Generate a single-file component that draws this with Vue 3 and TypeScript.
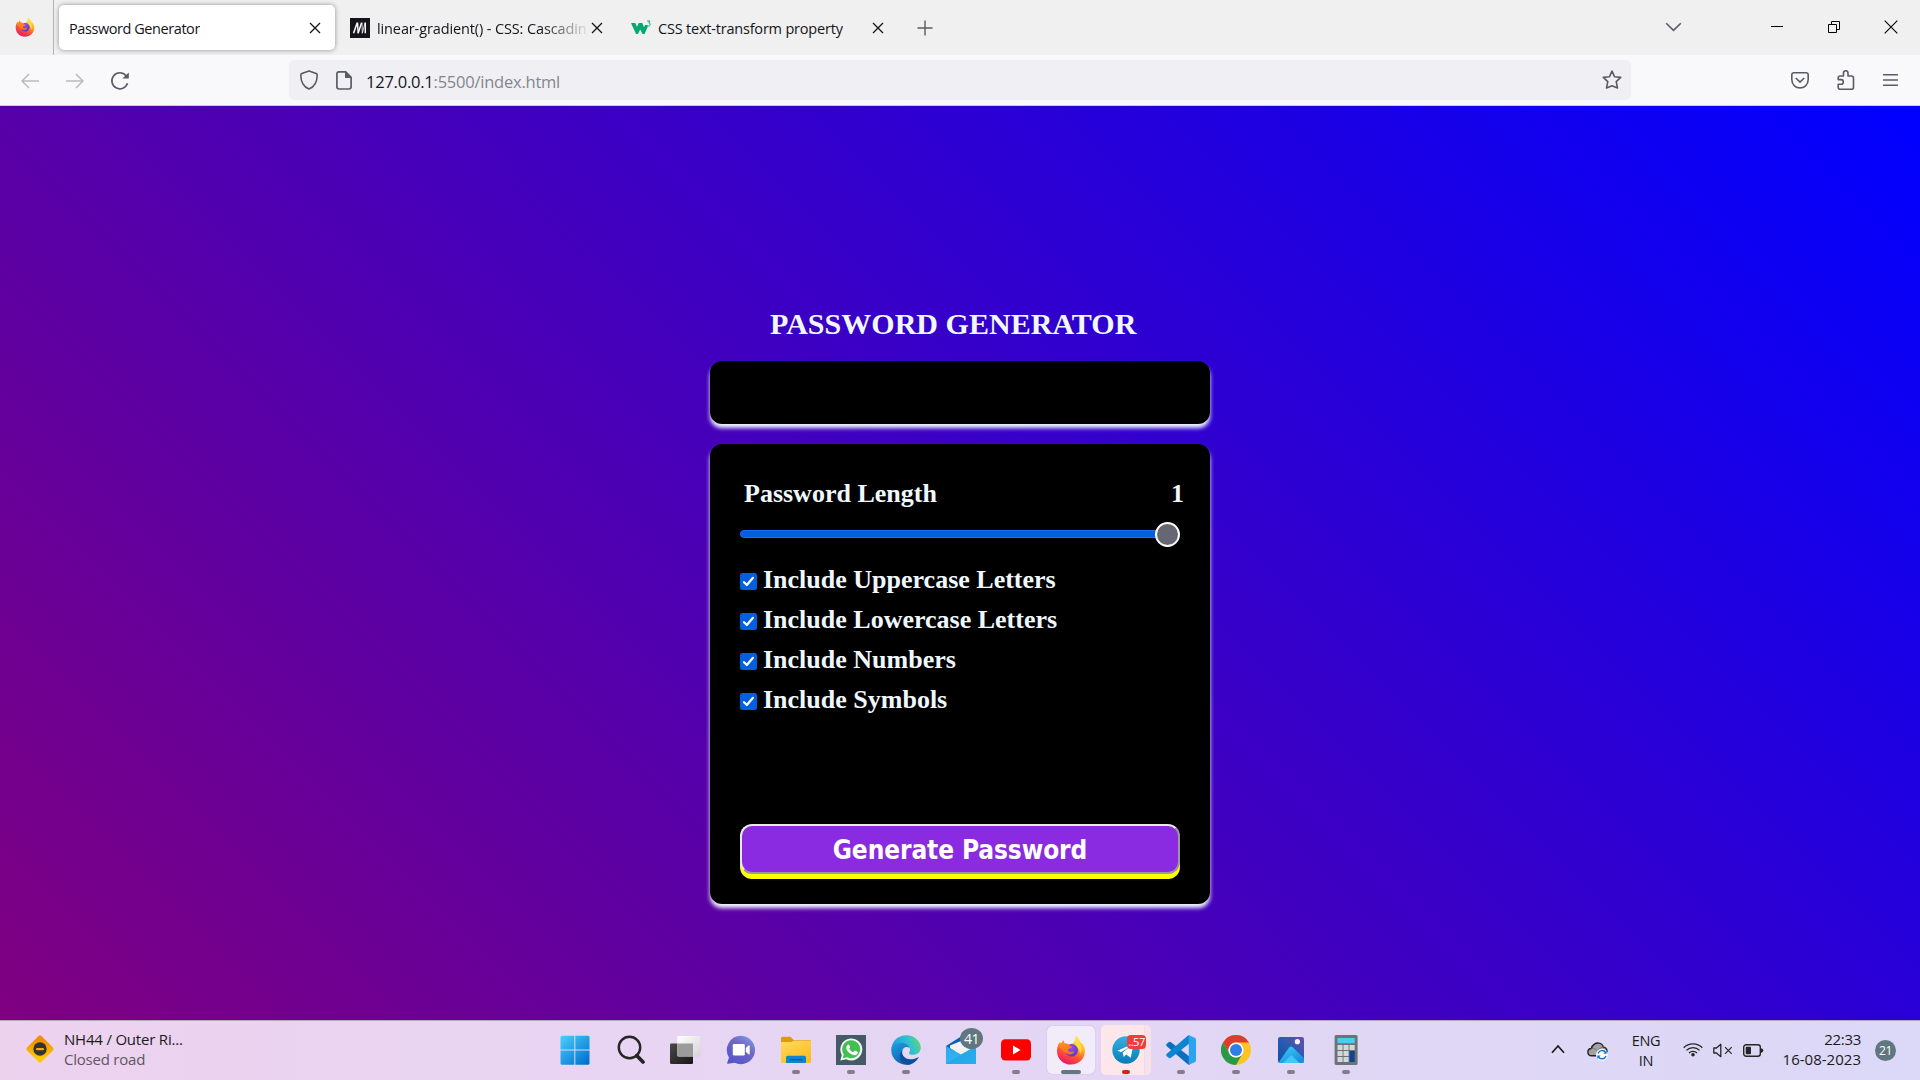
<script setup lang="ts">
import { ref } from 'vue'

interface Option {
  label: string
  checked: boolean
}

const passwordLength = ref<number>(1)
const options = ref<Option[]>([
  { label: 'Include Uppercase Letters', checked: true },
  { label: 'Include Lowercase Letters', checked: true },
  { label: 'Include Numbers', checked: true },
  { label: 'Include Symbols', checked: true },
])
</script>

<template>
  <div class="desktop">
    <svg class="defs" width="0" height="0">
      <defs>
        <linearGradient id="fx-body" x1="0.8" y1="0" x2="0.3" y2="1">
          <stop offset="0" stop-color="#fff44f" /><stop offset="0.35" stop-color="#ffb321" />
          <stop offset="0.62" stop-color="#ff5a33" /><stop offset="1" stop-color="#ee1164" />
        </linearGradient>
        <radialGradient id="fx-globe" cx="0.45" cy="0.3" r="0.75">
          <stop offset="0" stop-color="#a04be8" /><stop offset="0.6" stop-color="#6a45d8" /><stop offset="1" stop-color="#4a3cb0" />
        </radialGradient>
        <linearGradient id="fx-flame" x1="0" y1="0" x2="0.7" y2="1">
          <stop offset="0" stop-color="#ff9a1f" /><stop offset="1" stop-color="#ff6a25" />
        </linearGradient>
        <symbol id="firefox" viewBox="0 0 30 30">
          <path d="M20.3 1C22.5 2.5 23.6 5 24.2 7C27.2 8.8 29 12 29 16.3C29 23.8 22.8 29.6 15 29.6C7.2 29.6 1 23.8 1 16.2C1 12.6 2 9.5 3.7 7.2L4.6 9L7.3 5.2L8.5 8.5C10.5 8.2 12 9 13 10.2C15 8.2 18.2 9.2 18.6 6.5C18.8 4.5 19.2 2.7 20.3 1Z" fill="url(#fx-body)" />
          <circle cx="15.6" cy="15.3" r="6.3" fill="url(#fx-globe)" />
          <path d="M2.3 11.5L4 7.2L5 9L7.3 5.2L8.5 8.6C11 8.3 12.6 9.2 13.4 10.8L16.2 11.6C16 13 14 13.3 12.6 14C11.4 14.7 12 16.4 13.6 16.8C15.3 17.2 16.6 16 18.3 16.8C17 19.6 13.5 20.3 11 18.6C7 17 5 12.5 2.3 11.5Z" fill="url(#fx-flame)" />
          <path d="M20.2 2.2C22.6 4.4 22.8 7 23.6 8.5C26.2 12 26 16 24 19C23.8 14.5 22.2 12.6 20 10.8C18.3 9 18.8 5 20.2 2.2Z" fill="#ffe345" opacity="0.85" />
        </symbol>
        <symbol id="cross" viewBox="0 0 12 12">
          <path d="M1 1L11 11M11 1L1 11" stroke="#15141a" stroke-width="1.3" fill="none" />
        </symbol>
      </defs>
    </svg>

    <header class="tabs">
      <div class="pinned"><svg width="20" height="20"><use href="#firefox" /></svg></div>
      <div class="tab active">
        <span class="tab-title t1">Password Generator</span>
        <svg class="x" width="12" height="12"><use href="#cross" /></svg>
      </div>
      <div class="tab second">
        <svg width="20" height="20" viewBox="0 0 20 20">
          <rect width="20" height="20" fill="#15141a" />
          <path d="M3.6 15.3L7.2 4.7M8.1 15.3L11.6 4.7" stroke="#fff" stroke-width="1.5" fill="none" />
          <path d="M7.6 4.5L8.1 15.3M15.3 4.5V15.3" stroke="#fff" stroke-width="1.4" />
          <path d="M12 4.5L12.3 15.3L15.1 4.7" stroke="#fff" stroke-width="0.8" fill="none" />
        </svg>
        <span class="tab-title fade">linear-gradient() - CSS: Cascading</span>
        <svg class="x" width="12" height="12"><use href="#cross" /></svg>
      </div>
      <div class="tab third">
        <svg width="20" height="20" viewBox="0 0 20 20">
          <path d="M0 5H4.3L6 9L7.7 5H11.3L13 9.3L14 7H16.2L16.8 8.7L13.5 16H11.5L9.2 11.6L7 16H5Z" fill="#04a96d" />
          <path d="M16.2 3H19L17.8 4.9C19.9 5 19.7 8 17.6 8C16.7 8 16.2 7.6 16 7.1" fill="none" stroke="#04a96d" stroke-width="1" />
        </svg>
        <span class="tab-title t3">CSS text-transform property</span>
        <svg class="x" width="12" height="12"><use href="#cross" /></svg>
      </div>
      <svg class="plus" width="16" height="16"><path d="M8 .5V15.5M.5 8H15.5" stroke="#5b5b66" stroke-width="1.4" /></svg>
      <div class="window-buttons">
        <svg width="17" height="10" viewBox="0 0 17 10"><path d="M1.2 1.2L8.5 8.3L15.8 1.2" fill="none" stroke="#5b5b66" stroke-width="1.6" /></svg>
        <svg class="min" width="12" height="13"><path d="M0 5.5H12" stroke="#000" /></svg>
        <svg class="restore" width="12" height="12"><path d="M.5 3.5H8.5V11.5H.5ZM3.5 3.5V.5H11.5V8.5H8.5" fill="none" stroke="#000" /></svg>
        <svg class="close" width="14" height="14"><path d="M.7 .7L13.3 13.3M13.3 .7L.7 13.3" stroke="#000" stroke-width="1.1" /></svg>
      </div>
    </header>

    <nav class="toolbar">
      <svg class="back" width="18" height="16"><path d="M18 8H1M8 1L1 8L8 15" fill="none" stroke="#b9b9c0" stroke-width="1.5" /></svg>
      <svg class="forward" width="18" height="16"><path d="M0 8H17M10 1L17 8L10 15" fill="none" stroke="#b9b9c0" stroke-width="1.5" /></svg>
      <svg class="reload" width="20" height="20" viewBox="0 0 20 20">
        <path d="M17.5 12.2A8 8 0 1 1 16 4.6" fill="none" stroke="#5b5b66" stroke-width="1.7" />
        <path d="M18.8 1.5V7.5H12.4Z" fill="#5b5b66" />
      </svg>
      <div class="address">
        <svg class="shield" width="18" height="20" viewBox="0 0 18 20"><path d="M9 .9L16.2 3.6Q17.2 4 17.2 5C17.2 11.5 14.5 16.8 9 19.1C3.5 16.8.8 11.5.8 5Q.8 4 1.8 3.6Z" fill="none" stroke="#5b5b66" stroke-width="1.6" stroke-linejoin="round" /></svg>
        <svg class="page-icon" width="16" height="19" viewBox="0 0 16 19"><path d="M3 .9H9.7L15.1 6.3V15.8Q15.1 18 13 18H3Q.9 18 .9 15.8V3Q.9.9 3 .9Z" fill="none" stroke="#5b5b66" stroke-width="1.7" /><path d="M9 0V7H16Z" fill="#5b5b66" /></svg>
        <span class="url"><b>127.0.0.1</b>:5500/index.html</span>
        <svg class="star" width="20" height="20" viewBox="0 0 20 20"><path d="M10 1.1L12.5 6.7L18.7 7.4L14.2 11.7L15.5 18L10 15.7L4.5 18L5.8 11.7L1.3 7.4L7.5 6.7Z" fill="none" stroke="#5b5b66" stroke-width="1.6" stroke-linejoin="round" /></svg>
      </div>
      <div class="tools">
        <svg width="18" height="17" viewBox="0 0 18 17"><path d="M3 .8H15Q17.2.8 17.2 3V7.5C17.2 18.7.8 18.7.8 7.5V3Q.8.8 3 .8Z" fill="none" stroke="#5b5b66" stroke-width="1.6" /><path d="M4.8 6L9 10L13.2 6" fill="none" stroke="#5b5b66" stroke-width="1.7" /></svg>
        <svg class="puzzle" width="18" height="20" viewBox="0 0 18 20"><path d="M3.2 19.2Q1.2 19.2 1.2 17.2V14.2H4.2C7 14.2 7 9.6 4.2 9.6H1.2V8Q1.2 6 3.2 6H6.5V3.2C6.5 0 11 0 11 3.2V6H14.5Q16.5 6 16.5 8V17.2Q16.5 19.2 14.5 19.2Z" fill="none" stroke="#5b5b66" stroke-width="1.6" stroke-linejoin="round" /></svg>
        <svg class="menu" width="15" height="12"><path d="M0 .8H15M0 6H15M0 11.2H15" stroke="#5b5b66" stroke-width="1.5" /></svg>
      </div>
    </nav>

    <main class="page">
      <div class="generator">
        <h2>PASSWORD GENERATOR</h2>
        <div class="display"></div>
        <section class="settings">
          <div class="length-row"><span>Password Length</span><span>{{ passwordLength }}</span></div>
          <div class="slider"><div class="track"></div><div class="thumb"></div></div>
          <label v-for="option in options" :key="option.label" class="option">
            <svg class="check" width="17" height="17" viewBox="0 0 17 17">
              <rect width="17" height="17" rx="2.5" fill="#0060df" />
              <path v-if="option.checked" d="M4 9.2L6.8 12L13 4.8" fill="none" stroke="#fff" stroke-width="2.2" stroke-linecap="round" stroke-linejoin="round" />
            </svg>
            <span>{{ option.label }}</span>
          </label>
          <button class="generate">Generate Password</button>
        </section>
      </div>
    </main>

    <footer class="taskbar">
      <div class="widget">
        <svg width="30" height="30" viewBox="0 0 30 30">
          <defs><linearGradient id="sign" x1="0" y1="0" x2="1" y2="1"><stop offset="0.2" stop-color="#ee8f06" /><stop offset="0.8" stop-color="#fcc80a" /></linearGradient></defs>
          <rect x="4.8" y="4.8" width="20.4" height="20.4" rx="2" transform="rotate(45 15 15)" fill="url(#sign)" />
          <circle cx="15" cy="15" r="6.7" fill="#333" /><rect x="11" y="14" width="8" height="2.2" rx="1" fill="#f5a90a" />
        </svg>
        <div class="widget-text"><span class="w1">NH44 / Outer Ri...</span><span class="w2">Closed road</span></div>
      </div>

      <div class="apps">
        <div class="app">
          <svg width="30" height="30" viewBox="0 0 30 30">
            <defs><linearGradient id="win" gradientUnits="userSpaceOnUse" x1="0" y1="0" x2="26" y2="30"><stop offset="0" stop-color="#4cd2fd" /><stop offset="1" stop-color="#0070d0" /></linearGradient></defs>
            <path d="M2 .8H14.3V14.5H.5V2.3Q.5.8 2 .8ZM15.3 .8H28Q29.5.8 29.5 2.3V14.5H15.3ZM.5 15.6H14.3V29.7H2Q.5 29.7 .5 28.2ZM15.3 15.6H29.5V28.2Q29.5 29.7 28 29.7H15.3Z" fill="url(#win)" />
          </svg>
        </div>
        <div class="app">
          <svg width="30" height="30" viewBox="0 0 30 30"><circle cx="14.5" cy="12.5" r="10.7" fill="none" stroke="#252525" stroke-width="2.4" /><path d="M21.7 20.5L28 27" stroke="#252525" stroke-width="3.7" stroke-linecap="round" /></svg>
        </div>
        <div class="app">
          <svg width="32" height="30" viewBox="0 0 32 30">
            <defs><linearGradient id="tv" x2="1" y2="1"><stop stop-color="#484848" /><stop offset="1" stop-color="#171717" /></linearGradient><linearGradient id="tw" x2="1" y2="1"><stop stop-color="#fff" /><stop offset="1" stop-color="#d4d4d4" /></linearGradient></defs>
            <rect x="1" y="8.5" width="23" height="20.5" rx="1.2" fill="url(#tv)" /><rect x="8.3" y="1" width="23" height="20.5" rx="1.2" fill="url(#tw)" />
            <path d="M8.3 8.5H24V21.5H9.5Q8.3 21.5 8.3 20.3Z" fill="#9b9b9b" />
          </svg>
        </div>
        <div class="app">
          <svg width="30" height="30" viewBox="0 0 30 30">
            <defs><linearGradient id="chat" x1="1" y1="0" x2="0.3" y2="1"><stop stop-color="#7fa8ee" /><stop offset=".45" stop-color="#7267c5" /><stop offset="1" stop-color="#5457c9" /></linearGradient></defs>
            <path d="M15 .8A14.2 14.2 0 1 1 8.7 27.8L2 28.7Q.8 28.8 1.3 27.5L3 22.5A14.2 14.2 0 0 1 15 .8Z" fill="url(#chat)" />
            <rect x="6.8" y="9" width="12" height="11.6" rx="1.3" fill="#fff" /><path d="M19.8 13L22.5 10.5Q23.7 10 23.7 11.4V18.5Q23.7 20 22.5 19.2L19.8 16.8Z" fill="#fff" />
          </svg>
        </div>
        <div class="app">
          <svg width="30" height="30" viewBox="0 0 30 30">
            <defs><linearGradient id="fold" x2="0.7" y2="1"><stop stop-color="#ffda62" /><stop offset="1" stop-color="#fcbc1c" /></linearGradient></defs>
            <path d="M0 3.3Q0 1.8 1.5 1.8H9.5L13 5.2H28.5Q30 5.2 30 6.5V10H0Z" fill="#dd9a0c" />
            <path d="M0 7H10L13 5.8H30V26.6Q30 28 28.5 28H1.5Q0 28 0 26.6Z" fill="url(#fold)" />
            <path d="M5 28V22.5Q5 20.8 6.7 20.8H23.3Q25 20.8 25 22.5V28Z" fill="#0f84d4" /><path d="M8.5 24.7H21.5" stroke="#0854a0" stroke-width="1.2" />
          </svg><i class="dot"></i>
        </div>
        <div class="app">
          <svg width="30" height="30" viewBox="0 0 30 30">
            <rect width="30" height="30" fill="#445b66" />
            <path d="M4.3 25.6L5.8 20A11 11 0 1 1 10.2 24.2Z" fill="#f5f7f5" /><path d="M6.7 23.2L7.8 19.4A9 9 0 1 1 11 22.2Z" fill="#41bf53" />
            <path d="M11.8 9.7Q12.8 9.1 13.3 10.2L14.1 12Q14.1 12.8 13.1 13.6Q14.5 16.3 17.3 17.2L18.6 15.8Q19 15.5 19.7 15.8L21.5 16.7Q22.1 17.2 21.8 18Q20.8 20.4 18.2 20.2C14 19.4 11.5 17 10.3 13.8Q9.8 11.3 11.8 9.7Z" fill="#fff" />
          </svg><i class="dot"></i>
        </div>
        <div class="app">
          <svg width="30" height="30" viewBox="0 0 30 30">
            <defs><linearGradient id="edge1" y1=".3" x2="1"><stop stop-color="#1aa0dc" /><stop offset=".55" stop-color="#35c1cf" /><stop offset="1" stop-color="#65e05c" /></linearGradient><linearGradient id="edge2" x2="0.5" y2="1"><stop stop-color="#1da0e2" /><stop offset="1" stop-color="#0f5fb4" /></linearGradient></defs>
            <path d="M.3 13.5C1.5 5 8 .2 15 .2C24 .2 29.8 6.5 29.8 12.6C29.8 17 26.5 19.8 22.5 19.8C18.5 19.8 17.2 18.3 18.6 16.4C20.5 13 17.2 8.5 11 8.2C6.5 8 2.5 10.4 .3 13.5Z" fill="url(#edge1)" />
            <path d="M.2 15C.2 10.5 5 7.5 10.5 7.8C15.5 8.1 18.4 11 18.8 13.5C15.5 10.2 10.8 13 10.6 18C10.4 23.7 14.5 28.5 19.5 29.2C9.5 31.6.2 24.5.2 15Z" fill="url(#edge2)" />
            <path d="M12 14.5C8.5 20.5 16.5 28.2 27.8 22C25.4 26.8 20.5 30 16.5 29.8C9 28.5 6 20 12 14.5Z" fill="#0c4f9c" />
          </svg><i class="dot"></i>
        </div>
        <div class="app">
          <svg width="30" height="30" viewBox="0 0 30 30">
            <defs><linearGradient id="mail" x2="1" y2="1"><stop stop-color="#2fa9ea" /><stop offset="1" stop-color="#2dbdf5" /></linearGradient></defs>
            <path d="M0 11L15 1.5L30 11V16H0Z" fill="#0c60b4" /><path d="M4 10.5L15 6L26 8.5V14L15 20L4 13Z" fill="#f2f2f2" />
            <path d="M0 11L15 19.5L30 11V29H0Z" fill="url(#mail)" /><path d="M0 29L17 18.4L30 11V29Z" fill="#1b93dc" opacity=".35" />
          </svg><span class="badge mail-badge">41</span>
        </div>
        <div class="app">
          <svg width="30" height="30" viewBox="0 0 30 30"><rect y="4.3" width="30" height="21.2" rx="4.2" fill="#f00" /><path d="M12 10.6V19.4L19.5 15Z" fill="#fff" /></svg><i class="dot"></i>
        </div>
        <div class="app"><div class="tile"></div><svg width="30" height="30"><use href="#firefox" /></svg><i class="dot wide"></i></div>
        <div class="app">
          <div class="tile alert"></div>
          <svg width="30" height="30" viewBox="0 0 30 30">
            <defs><linearGradient id="tg" x2="0" y2="1"><stop stop-color="#37aee2" /><stop offset="1" stop-color="#087cb8" /></linearGradient></defs>
            <circle cx="15" cy="15" r="13.7" fill="url(#tg)" /><path d="M6.5 15.8L22.5 8.5L19.8 22.7L15.2 19.5L12.7 22L11.7 17.5L19.2 11.6L10.2 17Z" fill="#fff" />
          </svg><span class="count">..57</span><i class="dot red"></i>
        </div>
        <div class="app">
          <svg width="30" height="30" viewBox="0 0 30 30">
            <path d="M.5 9L3 7Q4 6.5 5 7.2L24 22V29.5L22 29.6L.5 11Q0 10 .5 9Z" fill="#0a70bd" />
            <path d="M.5 21L3 23Q4 23.5 5 22.8L24 8V.5L22 .4L.5 19Q0 20 .5 21Z" fill="#0b85d2" />
            <path d="M22.3 0L28.7 2.7Q30 3.3 30 4.7V25.3Q30 26.7 28.7 27.3L22.3 30Q22.8 29.3 22.8 28V2Q22.8.7 22.3 0Z" fill="#2aa4f0" />
          </svg><i class="dot"></i>
        </div>
        <div class="app">
          <svg width="30" height="30" viewBox="0 0 30 30">
            <circle cx="15" cy="15" r="15" fill="#fcc525" /><path d="M2 7.5A15 15 0 0 1 28 7.5H15A7.5 7.5 0 0 0 8.5 18.7Z" fill="#e03c2d" />
            <path d="M2 7.5L8.5 18.75A7.5 7.5 0 0 0 21.5 18.75L15 30A15 15 0 0 1 2 7.5Z" fill="#279a4a" />
            <circle cx="15" cy="15" r="7.6" fill="#fff" /><circle cx="15" cy="15" r="6" fill="#2f7de9" />
          </svg><i class="dot"></i>
        </div>
        <div class="app">
          <svg width="30" height="30" viewBox="0 0 30 30">
            <defs><linearGradient id="ph" x1="0" y1="1" x2="1" y2="0"><stop stop-color="#0e4faa" /><stop offset=".55" stop-color="#2d5cae" /><stop offset="1" stop-color="#6c4caa" /></linearGradient><linearGradient id="mt" x2="0.6" y2="1"><stop stop-color="#3fd0fb" /><stop offset="1" stop-color="#1990df" /></linearGradient></defs>
            <rect x="2" y="2" width="26" height="26" rx="2.2" fill="url(#ph)" />
            <path d="M3 26.8L13.2 12.5Q15 10.5 17 12.5L28 23.3V26Q28 28 26 28H4.2Q2.8 28 3 26.8Z" fill="url(#mt)" /><path d="M7 28L15.3 20L23.5 28Z" fill="#45c5f5" />
            <circle cx="21.4" cy="6.7" r="2.6" fill="#f6f1ff" />
          </svg><i class="dot"></i>
        </div>
        <div class="app">
          <svg width="30" height="30" viewBox="0 0 30 30">
            <rect x="3.6" width="23" height="30" rx="1.5" fill="#6c7378" /><rect x="6.5" y="3" width="17.2" height="5.2" rx=".6" fill="#43d0f5" />
            <path d="M6.5 10H11.6V15H6.5ZM12.5 10H17.6V15H12.5ZM18.5 10H23.7V15H18.5ZM6.5 16H11.6V21H6.5ZM12.5 16H17.6V21H12.5ZM6.5 22H11.6V27H6.5ZM12.5 22H17.6V27H12.5Z" fill="#d3d7da" />
            <rect x="18.5" y="16" width="5.2" height="11" fill="#0e458c" />
          </svg><i class="dot"></i>
        </div>
      </div>

      <div class="tray">
        <svg class="up" width="14" height="10"><path d="M1 8.7L7 2L13 8.7" fill="none" stroke="#1b1b1b" stroke-width="1.7" /></svg>
        <svg class="cloud" width="21" height="19" viewBox="0 0 21 19">
          <path d="M4.8 13.8C-.4 13.5-.3 6.8 4.4 6.5C5.2 2.2 9 .7 11.8 1.1C14.2 1.4 15.8 3.1 16.3 5.1C21 5.7 21.5 13 16.3 13.8Z" fill="#a2a2a2" stroke="#202020" stroke-width="1.4" />
          <path d="M4.4 6.5C7 6 9 7 10.5 9C12 6.7 14 5.2 16.3 5.1" fill="none" stroke="#777" stroke-width="1" />
          <circle cx="15" cy="12.7" r="6" fill="#fff" />
          <path d="M11 11.5A4.3 4.3 0 0 1 18.7 10.6M19 14A4.3 4.3 0 0 1 11.3 14.8" fill="none" stroke="#1673cd" stroke-width="1.5" /><path d="M19.7 8.4V11.8H16.3ZM10.3 17V13.6H13.7Z" fill="#1673cd" />
        </svg>
        <div class="lang"><span>ENG</span><span>IN</span></div>
        <svg class="wifi" width="20" height="15" viewBox="0 0 20 15"><path d="M.7 5.7A13.1 13.1 0 0 1 19.3 5.7M3.4 8.4A9.3 9.3 0 0 1 16.6 8.4M6 11A5.6 5.6 0 0 1 14 11" fill="none" stroke="#252525" stroke-width="1.3" /><circle cx="10" cy="12.7" r="1.8" fill="#252525" /></svg>
        <svg class="speaker" width="20" height="15" viewBox="0 0 20 15"><path d="M.8 5H3.5L7.8 1.3V13.7L3.5 10H.8Z" fill="none" stroke="#252525" stroke-width="1.3" stroke-linejoin="round" /><path d="M12 4.2L18.7 10.9M18.7 4.2L12 10.9" stroke="#252525" stroke-width="1.2" /></svg>
        <svg class="battery" width="21" height="13" viewBox="0 0 21 13"><rect x=".7" y=".7" width="16.6" height="11.6" rx="2.5" fill="none" stroke="#252525" stroke-width="1.4" /><rect x="2.7" y="2.7" width="5.3" height="7.6" rx="1" fill="#252525" /><path d="M18 4.2Q20.3 4.4 20.3 6.5Q20.3 8.6 18 8.8Z" fill="#252525" /></svg>
        <div class="clock"><span class="time">22:33</span><span class="date">16-08-2023</span></div>
        <span class="badge notif">21</span>
      </div>
    </footer>
  </div>
</template>

<style>
body {
  margin: 0;
  overflow: hidden;
}
</style>

<style scoped>
* {
  box-sizing: border-box;
}
svg {
  display: block;
  flex: none;
}
.defs {
  position: absolute;
}
.desktop {
  display: flex;
  flex-direction: column;
  width: 1920px;
  height: 1080px;
  overflow: hidden;
  font-family: 'Open Sans', 'Noto Sans', sans-serif;
  color: #15141a;
}

/* Tab strip */
.tabs {
  display: flex;
  height: 55px;
  background: #f0f0f0;
  flex: none;
}
.pinned {
  width: 54px;
  padding: 17px 0 0 15px;
  border-right: 1px solid #b3b3b5;
}
.tab {
  display: flex;
  align-items: center;
  height: 45px;
  margin-top: 5px;
  font-size: 15px;
  white-space: nowrap;
}
.tab-title {
  line-height: 20px;
  flex: none;
  overflow: hidden;
  padding-top: 3px;
}
.tab .x {
  margin-left: auto;
}
.active {
  width: 276px;
  margin-left: 5px;
  padding: 0 14.5px 0 10px;
  background: #fff;
  border-radius: 5px;
  box-shadow: 0 0 5px rgba(0, 0, 0, 0.4);
}
.t1 {
  font-size: 14.5px;
  letter-spacing: -0.43px;
}
.second {
  width: 252.5px;
  margin-left: 15px;
}
.fade {
  width: 210px;
  margin-left: 7px;
  font-size: 14.5px;
  letter-spacing: -0.12px;
  mask-image: linear-gradient(to right, #000 165px, transparent 214px);
}
.third {
  width: 252.5px;
  margin-left: 28.5px;
}
.t3 {
  margin-left: 7px;
  font-size: 14.5px;
  letter-spacing: -0.2px;
}
.plus {
  margin: 20px 0 0 33.5px;
}
.window-buttons {
  display: flex;
  align-items: flex-start;
  margin-left: auto;
  padding: 22px 22px 0 0;
}
.min {
  margin: -1px 0 0 89px;
}
.restore {
  margin: -1px 0 0 45px;
}
.close {
  margin: -2px 0 0 44px;
}

/* Navigation */
.toolbar {
  display: flex;
  align-items: center;
  height: 51px;
  padding-left: 21px;
  background: #f9f9fb;
  border-bottom: 1px solid #cccccf;
  flex: none;
}
.back,
.forward {
  margin-top: 1px;
}
.forward {
  margin-left: 27px;
}
.reload {
  margin: 2px 0 0 26px;
}
.address {
  display: flex;
  align-items: center;
  width: 1342px;
  height: 40px;
  margin-left: 159px;
  padding: 0 9px 0 11px;
  background: #f0f0f4;
  border-radius: 5px;
}
.page-icon {
  margin-left: 18px;
}
.url {
  margin-left: 14px;
  padding-top: 4px;
  font-size: 16.5px;
  letter-spacing: -0.23px;
  line-height: 24px;
  color: #85858d;
}
.url b {
  font-weight: 400;
  color: #15141a;
}
.star {
  margin-left: auto;
}
.tools {
  display: flex;
  align-items: center;
  margin-left: 160px;
}
.puzzle {
  margin-left: 28px;
}
.menu {
  margin-left: 27.5px;
  margin-bottom: 1px;
}

/* Page */
.page {
  display: flex;
  justify-content: center;
  height: 914px;
  background: linear-gradient(45deg, purple, blue);
  flex: none;
}
.generator {
  width: 500px;
  padding-top: 200px;
  font-family: 'Liberation Serif', 'Times New Roman', serif;
  font-weight: 700;
  color: aliceblue;
}
h2 {
  margin: 0 0 19px 60px;
  font-size: 30px;
  letter-spacing: 0.03px;
  line-height: 36px;
}
.display {
  height: 63px;
  border-radius: 12px;
  background: #000;
  box-shadow: 0 4px 4px aliceblue;
}
.settings {
  height: 460px;
  margin-top: 20px;
  padding: 35px 30px 0;
  border-radius: 12px;
  background: #000;
  box-shadow: 0 4px 4px aliceblue;
  font-size: 26px;
}
.length-row {
  display: flex;
  justify-content: space-between;
  margin: 0 -4px 13px 4px;
  line-height: 30px;
}
.slider {
  display: flex;
  align-items: center;
  height: 25px;
  margin-bottom: 13px;
}
.track {
  flex: 1;
  height: 8px;
  margin: 0 -2px 1px 0;
  background: #0060df;
  border: 1px solid #1a70f0;
  border-radius: 4px 0 0 4px;
}
.thumb {
  width: 25px;
  height: 25px;
  border: 2px solid #fff;
  border-radius: 50%;
  background: #676774;
}
.option {
  display: flex;
  height: 40px;
  line-height: 40px;
}
.check {
  margin: 13px 6px 0 0;
}
.generate {
  display: block;
  width: 440px;
  height: 50px;
  margin-top: 104px;
  padding: 2px 0 0;
  border: 2px solid;
  border-color: #e8e8ec #999 #999 #e8e8ec;
  border-radius: 12px;
  background: blueviolet;
  box-shadow: 0 5px 0 yellow;
  font-family: 'DejaVu Sans Condensed', 'DejaVu Sans', sans-serif;
  font-stretch: condensed;
  font-size: 26px;
  font-weight: 700;
  letter-spacing: -0.1px;
  line-height: 44px;
  color: #fff;
}

/* Taskbar */
.taskbar {
  display: flex;
  height: 60px;
  border-top: 1px solid #b5a5bd;
  background: linear-gradient(to right, #edd2ee, #e7d5f3 35%, #dfd7f5 75%, #dcd8f7);
  color: #1b1b1b;
  font-size: 15px;
  flex: none;
}
.widget {
  display: flex;
  width: 547px;
  padding-left: 25px;
  flex: none;
}
.widget svg {
  margin-top: 13px;
}
.widget-text {
  display: flex;
  flex-direction: column;
  margin: 8px 0 0 9px;
  line-height: 20px;
}
.w1 {
  letter-spacing: -0.2px;
}
.w2 {
  letter-spacing: -0.22px;
  color: #5f5663;
}
.apps {
  display: flex;
}
.app {
  position: relative;
  display: flex;
  justify-content: center;
  width: 55px;
  padding-top: 14px;
}
/* From the chat icon onwards every slot sits one pixel further right. */
.app:nth-child(3) {
  width: 56px;
}
.app > svg {
  position: relative;
}
.dot {
  position: absolute;
  top: 49px;
  left: calc(50% - 4px);
  width: 8px;
  height: 4px;
  border-radius: 2px;
  background: #857b8b;
}
.wide {
  left: calc(50% - 10px);
  width: 20px;
  background: #627985;
}
.red {
  background: #c42b1c;
}
.tile {
  position: absolute;
  top: 5px;
  left: calc(50% - 24px);
  width: 48px;
  height: 48px;
  border-radius: 5px;
  background: #f2ebfa;
  box-shadow: 0 0 1px rgba(90, 60, 110, 0.4);
}
.alert {
  top: 4px;
  left: calc(50% - 25px);
  width: 50px;
  height: 50px;
  background: linear-gradient(to right, transparent 43px, #e9d8f0 43px, #f8e2ea 45px), #fde7ea;
  box-shadow: none;
}
.badge {
  display: flex;
  align-items: center;
  justify-content: center;
  border-radius: 50%;
  background: #607782;
  color: #fff;
}
.mail-badge {
  position: absolute;
  top: 7px;
  left: 27px;
  width: 23px;
  height: 21px;
  font-size: 14px;
  letter-spacing: -0.6px;
}
.count {
  position: absolute;
  top: 14px;
  left: 29px;
  width: 19px;
  height: 14px;
  border-radius: 4px;
  background: #ee3d3d;
  color: #fff;
  font-size: 11px;
  line-height: 14px;
  letter-spacing: -0.5px;
  text-align: center;
}
.tray {
  display: flex;
  margin-left: auto;
  padding-right: 24px;
  line-height: 20px;
}
.up {
  margin-top: 23px;
}
.cloud {
  margin: 21px 0 0 22px;
}
.lang {
  display: flex;
  flex-direction: column;
  align-items: center;
  width: 32px;
  margin: 10px 0 0 22px;
  font-size: 14.5px;
  letter-spacing: -0.3px;
}
.wifi {
  margin: 21px 0 0 21px;
}
.speaker {
  margin: 22px 0 0 10px;
}
.battery {
  margin: 23px 0 0 10px;
}
.clock {
  display: flex;
  flex-direction: column;
  align-items: flex-end;
  width: 80px;
  margin: 8px 0 0 17px;
  font-size: 15px;
  letter-spacing: -0.3px;
  white-space: nowrap;
}
.date {
  letter-spacing: 0.02px;
}
.notif {
  width: 21px;
  height: 21px;
  margin: 19px 0 0 14px;
  font-size: 12px;
  letter-spacing: -0.4px;
}
</style>
